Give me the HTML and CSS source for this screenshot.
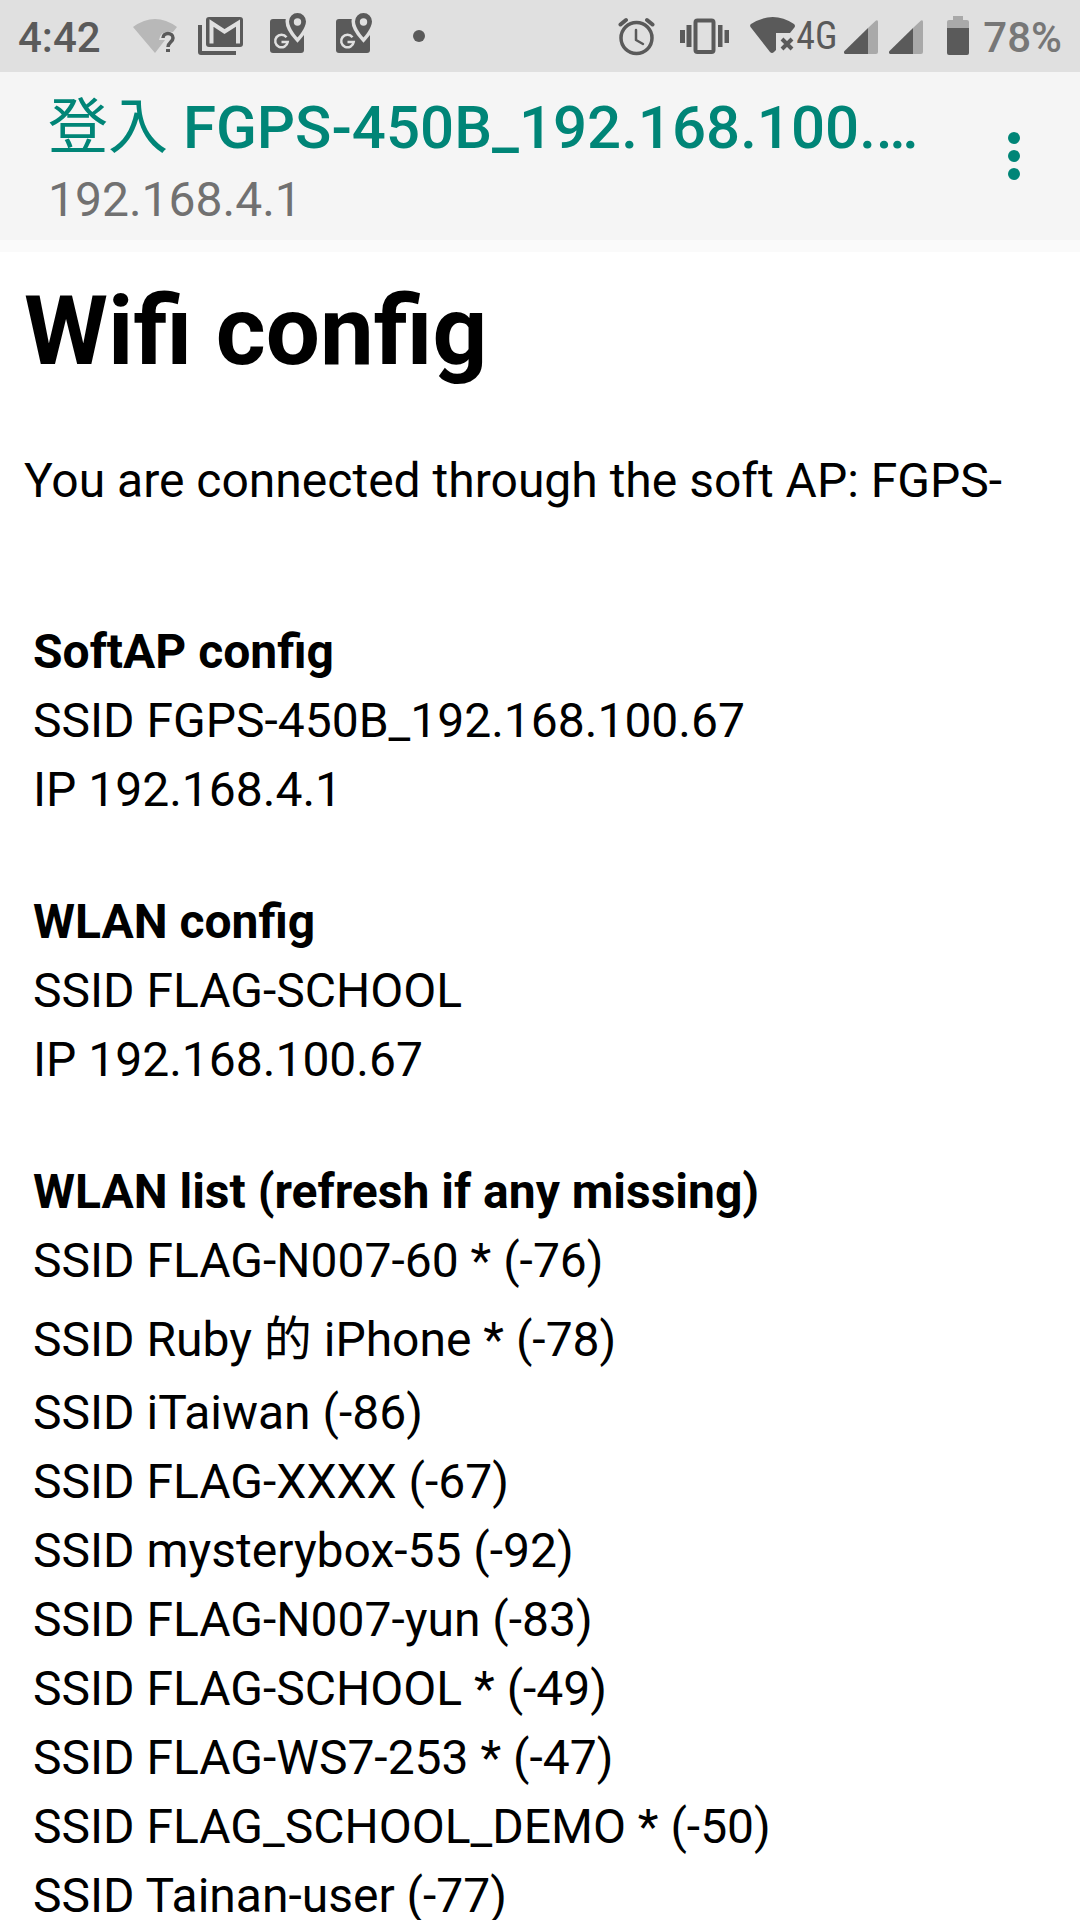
FILE: index.html
```html
<!DOCTYPE html>
<html lang="zh-Hant">
<head>
<meta charset="utf-8">
<meta name="viewport" content="width=device-width, initial-scale=1">
<title>Wifi config</title>
<link rel="stylesheet" href="styles.css">
</head>
<body>
<div class="screen">
  <div class="status-bar">
    <div class="notifications">
      <span class="clock">4:42</span>
      <svg class="wifi-unknown" width="46" height="72" viewBox="132 0 46 72" aria-hidden="true">
        <path fill="#b8b8b8" d="M133 27Q155 11 177 27L173 32Q160 30 159 40H165L155 53Z"/>
        <path fill="none" stroke="#5a5a5a" stroke-width="3.500" d="M163 38C163 32 173 32 173 38C173 42 168 42 168 47"/>
        <path fill="#5a5a5a" d="M166 49h4v3h-4z"/>
      </svg>
      <svg class="gmail" width="46" height="72" viewBox="198 0 46 72" aria-hidden="true">
        <path fill="#5a5a5a" d="M198 25h4v26h34v4h-35q-3 0-3-3z"/>
        <rect x="206" y="17" width="37" height="30" rx="3" fill="#5a5a5a"/>
        <path fill="none" stroke="#e0e0e0" stroke-width="4" d="M211.500 43.500V23L224.500 31.500L238 23V43.500"/>
      </svg>
      <svg class="maps" width="37" height="72" viewBox="270 0 37 72" aria-hidden="true">
        <g id="map-icon">
          <rect x="270" y="19" width="34" height="34" rx="3" fill="#5a5a5a"/>
          <path fill="#5a5a5a" stroke="#e0e0e0" stroke-width="7" d="M297.500 13a8.500 8.500 0 0 0-8.500 8.500C289 28 297.500 37.500 297.500 37.500S306 28 306 21.500A8.500 8.500 0 0 0 297.500 13z"/>
          <path fill="#5a5a5a" d="M297.500 13a8.500 8.500 0 0 0-8.500 8.500C289 28 297.500 37.500 297.500 37.500S306 28 306 21.500A8.500 8.500 0 0 0 297.500 13z"/>
          <circle cx="297.500" cy="22" r="3.700" fill="#e0e0e0"/>
          <path fill="none" stroke="#e0e0e0" stroke-width="2.500" d="M286.500 37.200A6.300 6.300 0 1 0 287.700 42H281.500"/>
        </g>
      </svg>
      <svg class="maps" width="37" height="72" viewBox="270 0 37 72" aria-hidden="true"><use href="#map-icon"/></svg>
      <svg class="more-dot" width="12" height="72" viewBox="0 0 12 72" aria-hidden="true"><circle cx="6" cy="36" r="6" fill="#5a5a5a"/></svg>
    </div>
    <div class="system">
      <svg class="alarm" width="37" height="72" viewBox="618 0 37 72" aria-hidden="true">
        <g fill="none" stroke="#5a5a5a" stroke-width="3.500">
          <circle cx="636.500" cy="38" r="15.500"/>
          <path stroke-width="2.500" stroke-linecap="round" stroke-linejoin="round" d="M636 30V40L643 44"/>
          <path stroke-linecap="round" stroke-width="4" d="M620.500 24.500L626 20M647 20L652.500 24.500"/>
        </g>
      </svg>
      <svg class="vibrate" width="50" height="72" viewBox="680 0 50 72" aria-hidden="true">
        <rect x="695.500" y="20.500" width="18" height="31.500" rx="2" fill="none" stroke="#5a5a5a" stroke-width="4"/>
        <path fill="#5a5a5a" d="M680 30h5v13h-5zM686.500 25h5v22h-5zM718 25h4.500v22H718zM724.500 30h4.500v13h-4.500z"/>
      </svg>
      <svg class="wifi-off" width="46" height="72" viewBox="750 0 46 72" aria-hidden="true">
        <path fill="#5a5a5a" d="M751 24Q773 10 794 24Q796 26 794 28L790 33H776V50L774 52Q772 54 770 52L750.500 27Q749.500 25 751 24Z"/>
        <path fill="none" stroke="#5a5a5a" stroke-width="4" d="M782 39L792 49M792 39L782 49"/>
      </svg>
      <span class="network">4G</span>
      <svg class="signal" width="34" height="72" viewBox="844 0 34 72" aria-hidden="true">
        <g id="signal-icon">
          <path fill="#a9a9a9" d="M868 28L876 20.500Q878 19.500 878 22V52Q878 54 876 54H868Z"/>
          <path fill="#5a5a5a" d="M868 28V54H845Q843 53 844.500 51Z"/>
        </g>
      </svg>
      <svg class="signal-second" width="34" height="72" viewBox="844 0 34 72" aria-hidden="true"><use href="#signal-icon"/></svg>
      <svg class="battery" width="22" height="72" viewBox="947 0 22 72" aria-hidden="true">
        <path fill="#a9a9a9" d="M953 16h10v4h4q2 0 2 2v6h-22v-6q0-2 2-2h4z"/>
        <path fill="#5a5a5a" d="M947 28h22v25q0 2-2 2h-18q-2 0-2-2z"/>
      </svg>
      <span class="charge">78%</span>
    </div>
  </div>

  <header class="app-bar">
    <div class="heading">
      <div class="page-title"><span class="action">登入</span> FGPS-450B_192.168.100.…</div>
      <div class="page-host">192.168.4.1</div>
    </div>
    <button class="menu-button" type="button" aria-label="Menu">
      <svg width="12" height="48" viewBox="0 0 12 48" aria-hidden="true" fill="#008577"><circle cx="6" cy="6" r="6"/><circle cx="6" cy="24" r="6"/><circle cx="6" cy="42" r="6"/></svg>
    </button>
  </header>
  <div class="progress-track"></div>

  <main class="content">
    <h1>Wifi config</h1>
    <p>You are connected through the soft AP: FGPS-</p>
    <div class="tables">
      <table>
        <tr><th>SoftAP config</th></tr>
        <tr><td>SSID FGPS-450B_192.168.100.67</td></tr>
        <tr><td>IP 192.168.4.1</td></tr>
      </table>
      <table>
        <tr><th>WLAN config</th></tr>
        <tr><td>SSID FLAG-SCHOOL</td></tr>
        <tr><td>IP 192.168.100.67</td></tr>
      </table>
      <table>
        <tr><th>WLAN list (refresh if any missing)</th></tr>
        <tr><td>SSID FLAG-N007-60 * (-76)</td></tr>
        <tr><td class="tall">SSID Ruby 的 iPhone * (-78)</td></tr>
        <tr><td>SSID iTaiwan (-86)</td></tr>
        <tr><td>SSID FLAG-XXXX (-67)</td></tr>
        <tr><td>SSID mysterybox-55 (-92)</td></tr>
        <tr><td>SSID FLAG-N007-yun (-83)</td></tr>
        <tr><td>SSID FLAG-SCHOOL * (-49)</td></tr>
        <tr><td>SSID FLAG-WS7-253 * (-47)</td></tr>
        <tr><td>SSID FLAG_SCHOOL_DEMO * (-50)</td></tr>
        <tr><td>SSID Tainan-user (-77)</td></tr>
      </table>
    </div>
  </main>
</div>
</body>
</html>
```
FILE: styles.css
```css
* {
  box-sizing: border-box;
}

body {
  margin: 0;
  background: #fff;
  color: #000;
  font-family: Roboto, "Noto Sans CJK TC", sans-serif;
  font-size: 48px;
  line-height: 57px;
}

.screen {
  height: 100vh;
  overflow: hidden;
}

svg {
  display: block;
  flex: none;
}

.status-bar {
  display: flex;
  justify-content: space-between;
  height: 72px;
  padding: 0 18px;
  background: #e0e0e0;
  color: #5a5a5a;
  font-size: 42px;
  line-height: 76px;
  font-weight: 500;
}

.notifications,
.system {
  display: flex;
}

.clock {
  width: 114px;
}

.gmail {
  margin-left: 20px;
}

.maps {
  margin-left: 26px;
}

.maps + .maps {
  margin-left: 29px;
}

.more-dot {
  margin-left: 40px;
}

.vibrate {
  margin-left: 25px;
}

.wifi-off {
  margin-left: 20px;
}

.network {
  width: 48px;
  font-family: "Roboto Condensed", "Liberation Sans Narrow", Roboto, sans-serif;
  font-size: 38px;
  line-height: 72px;
  font-weight: 400;
}

.signal-second {
  margin-left: 11px;
}

.battery {
  margin-left: 24px;
}

.charge {
  margin-left: 14px;
  color: #777;
}

.app-bar {
  display: flex;
  align-items: center;
  justify-content: space-between;
  height: 168px;
  padding: 0 48px;
  background: #f5f5f5;
}

.heading {
  flex: 1;
  min-width: 0;
  padding-top: 13px;
}

.page-title {
  color: #008577;
  font-size: 60px;
  font-weight: 500;
  line-height: 72px;
  white-space: nowrap;
}

.action {
  font-weight: 400;
}

.page-host {
  margin-top: 3px;
  color: #717171;
  line-height: 66px;
}

.menu-button {
  flex: none;
  padding: 0 12px;
  border: 0;
  background: none;
}

.progress-track {
  height: 12px;
  background: #fafafa;
}

.content {
  padding: 23px 24px;
}

h1 {
  margin: 0 0 65px;
  font-size: 96px;
  line-height: 112px;
}

p {
  margin: 0 0 108px;
}

.tables {
  display: grid;
  gap: 63px;
}

table {
  border-collapse: collapse;
}

th,
td {
  padding: 6px 9px;
  text-align: left;
  white-space: nowrap;
}

.tall {
  padding: 16px 9px 10px;
}
```
